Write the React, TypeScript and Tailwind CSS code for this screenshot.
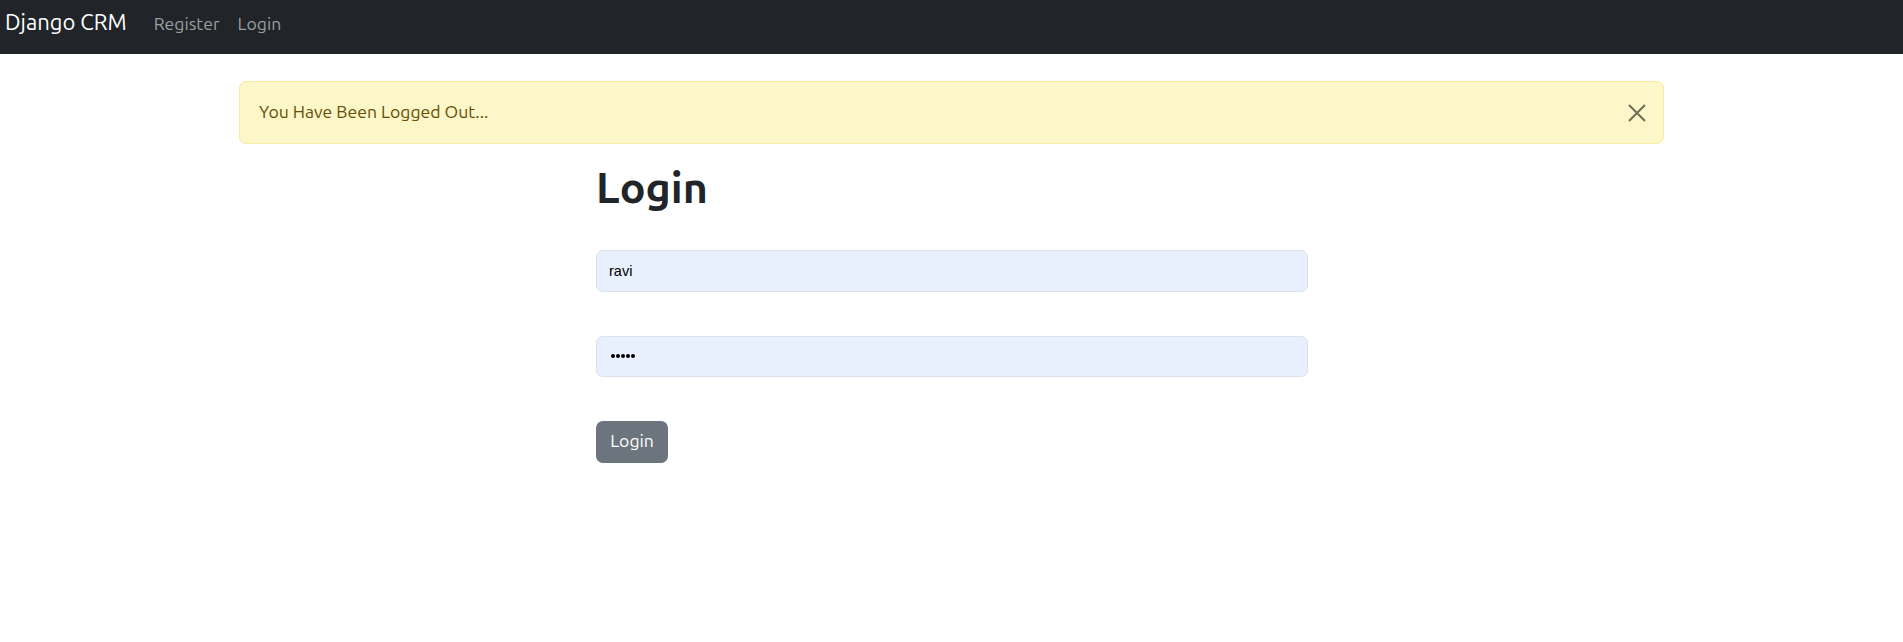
import React from "react";

export default function App() {
  return (
    <div className="min-h-[642px] bg-white font-['Ubuntu','Noto_Sans',sans-serif] text-[#212529]">
      <nav className="flex h-[54px] items-baseline bg-[#212529] pl-[5px] pt-[9px]">
        <span className="mr-[27px] text-[22px] leading-[26px] text-white">Django CRM</span>
        <span className="mr-[18px] text-[17.6px] text-[#9b9d9f]">Register</span>
        <span className="text-[17.6px] text-[#9b9d9f]">Login</span>
      </nav>
      <div className="mx-auto w-[1425px] pt-[27px]">
        <div className="flex h-[63px] items-center justify-between rounded-[7px] border border-[#faeba2] bg-[#fbf7c9] pl-[19px] pr-[17px] text-[17.6px] text-[#664d03]">
          <span>You Have Been Logged Out...</span>
          <svg width="18" height="18" viewBox="0 0 18 18" className="text-[#6f6c57]">
            <path d="M1 1 L17 17 M17 1 L1 17" stroke="currentColor" strokeWidth="2" />
          </svg>
        </div>
      </div>
      <div className="ml-[596px] w-[712px]">
        <h1 className="mt-[18px] text-[43px] font-bold leading-[1.2]">Login</h1>
        <div className="mt-[36px] flex flex-col">
          <div className="flex h-[42px] items-center rounded-[7px] border border-[#dbe0ea] bg-[#e8f0fe] pl-[12px] pt-[3px] font-['Liberation_Sans',Arial,sans-serif] text-[14.5px] text-black">
            ravi
          </div>
          <div className="mt-[44px] flex h-[41px] items-center gap-[1px] rounded-[7px] border border-[#dbe0ea] bg-[#e8f0fe] pl-[14px]">
            {[0, 1, 2, 3, 4].map((i) => (
              <span key={i} className="h-[4px] w-[4px] rounded-full bg-black" />
            ))}
          </div>
          <div className="mt-[44px]">
            <button className="h-[42px] w-[72px] rounded-[7px] bg-[#6c757d] text-[17.6px] text-white">
              Login
            </button>
          </div>
        </div>
      </div>
    </div>
  );
}
